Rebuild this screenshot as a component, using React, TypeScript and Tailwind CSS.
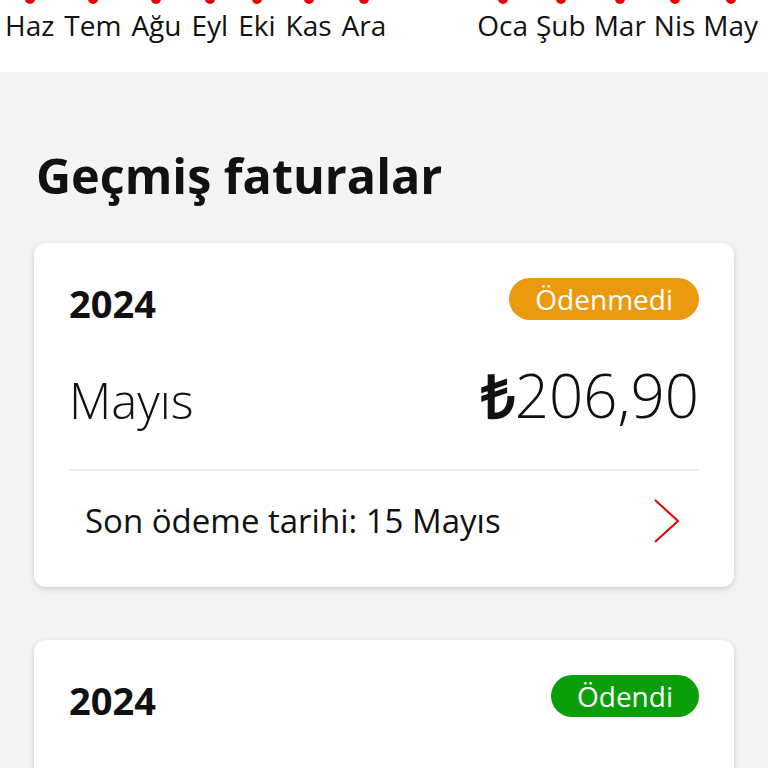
import React from "react";

const leftMonths = ["Haz", "Tem", "Ağu", "Eyl", "Eki", "Kas", "Ara"];
const rightMonths = ["Oca", "Şub", "Mar", "Nis", "May"];

function MonthLabel({ label }: { label: string }) {
  return (
    <div className="flex flex-col items-center">
      <span className="block h-[10px] w-[10px] -mt-[6px] rounded-full bg-[#e60000]" />
      <span className="mt-[4px] text-[28px] leading-[34px] text-[#111]">{label}</span>
    </div>
  );
}

type Bill = {
  year: string;
  month: string;
  amount: string;
  status: "paid" | "unpaid";
  due: string;
};

const bills: Bill[] = [
  { year: "2024", month: "Mayıs", amount: "206,90", status: "unpaid", due: "Son ödeme tarihi: 15 Mayıs" },
  { year: "2024", month: "Nisan", amount: "116,70", status: "paid", due: "Son ödeme tarihi: 15 Nisan" },
];

function BillCard({ bill }: { bill: Bill }) {
  return (
    <div className="rounded-[12px] bg-white shadow-[0_2px_6px_rgba(0,0,0,0.16)] px-[35px] pt-[35px] pb-[16px]">
      <div className="flex items-start justify-between">
        <span className="text-[38px] font-bold leading-none pt-[6px] text-[#111]">{bill.year}</span>
        {bill.status === "unpaid" ? (
          <span className="rounded-full bg-[#eb9a0d] px-[26px] h-[42px] flex items-center text-[28px] text-white">
            Ödenmedi
          </span>
        ) : (
          <span className="rounded-full bg-[#0a9e0a] px-[26px] h-[42px] flex items-center text-[28px] text-white">
            Ödendi
          </span>
        )}
      </div>
      <div className="mt-[43px] flex items-end justify-between pb-[44px] border-b-2 border-[#ececec] text-[#111]">
        <span className="text-[49px] font-light leading-none">{bill.month}</span>
        <span className="text-[60px] font-light leading-none">
          <span className="font-bold">₺</span>
          {bill.amount}
        </span>
      </div>
      <div className="flex items-center justify-between pl-[16px] pr-[18px] h-[100px]">
        <span className="text-[33px] text-[#111]">{bill.due}</span>
        <svg width="28" height="46" viewBox="0 0 28 46" fill="none">
          <path d="M2 2 L25 23 L2 44" stroke="#e60000" strokeWidth="2" />
        </svg>
      </div>
    </div>
  );
}

export default function App() {
  return (
    <div className="min-h-screen bg-[#f4f4f4] overflow-hidden" style={{ fontFamily: "'Open Sans', sans-serif" }}>
      <div className="bg-white h-[72px] flex items-start pl-[5px]">
        <div className="flex gap-[10px]">
          {leftMonths.map((m) => (
            <MonthLabel key={m} label={m} />
          ))}
        </div>
        <div className="flex gap-[8px] ml-[91px]">
          {rightMonths.map((m) => (
            <MonthLabel key={m} label={m} />
          ))}
        </div>
      </div>
      <div className="px-[34px]">
        <h2 className="pl-[2px] pt-[79px] pb-[43px] text-[48.5px] font-bold leading-none text-[#111]">
          Geçmiş faturalar
        </h2>
        <div className="flex flex-col gap-[53px]">
          {bills.map((b, i) => (
            <BillCard key={i} bill={b} />
          ))}
        </div>
      </div>
    </div>
  );
}
